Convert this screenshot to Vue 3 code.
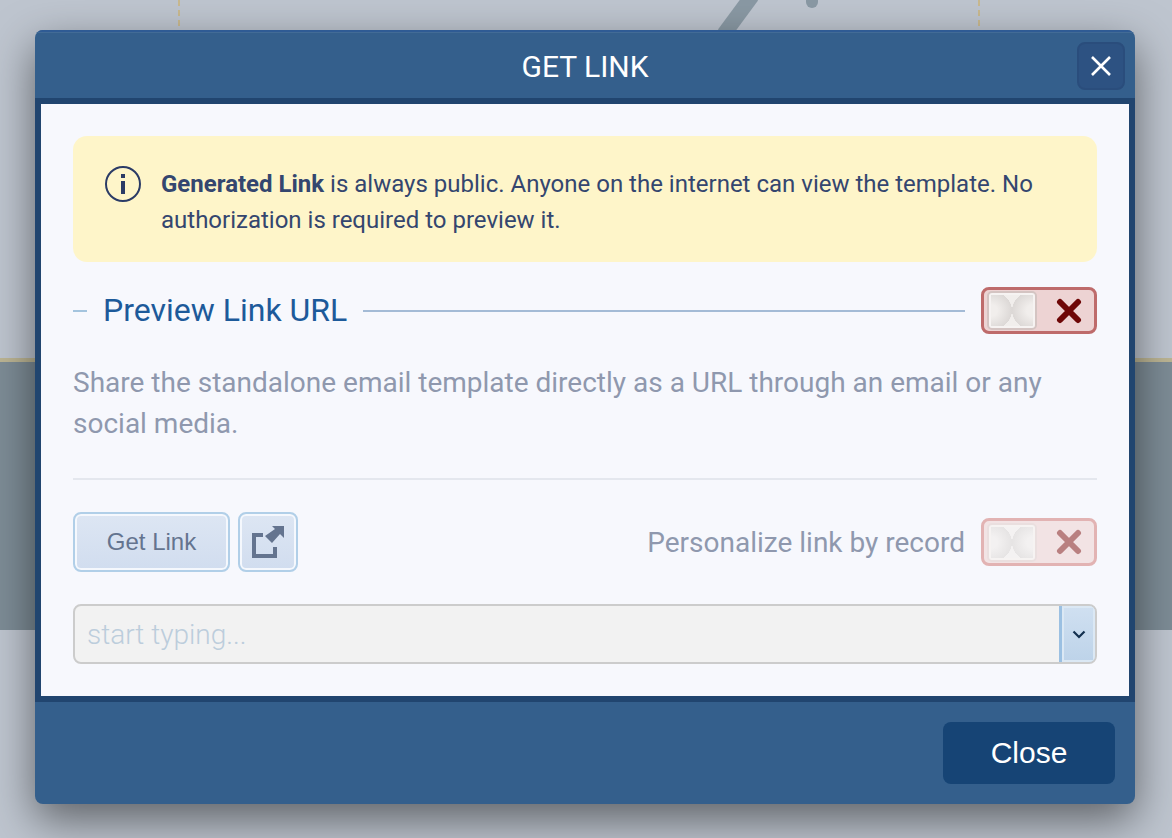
<template>
  <div class="page">
    <div class="backdrop">
      <div class="dash dash-left"></div>
      <div class="dash dash-right"></div>
      <svg class="art" width="1172" height="40" viewBox="0 0 1172 40">
        <path d="M752 -4L724 34" stroke="#8a99a4" stroke-width="15" fill="none" />
        <path d="M812 -6V2" stroke="#8a99a4" stroke-width="12" stroke-linecap="round" fill="none" />
      </svg>
      <div class="band"></div>
    </div>

    <div class="modal">
      <header class="modal-head">
        <h2 class="modal-title">GET LINK</h2>
        <button class="head-close">
          <svg width="20" height="20" viewBox="0 0 20 20">
            <path d="M1 1L19 19M19 1L1 19" stroke="#fff" stroke-width="2.6" />
          </svg>
        </button>
      </header>

      <div class="modal-body">
        <div class="notice">
          <svg class="notice-icon" width="36" height="36" viewBox="0 0 36 36">
            <circle cx="18" cy="18" r="17" fill="none" stroke="#2b3b66" stroke-width="2" />
            <rect x="16" y="8" width="4" height="4" fill="#2b3b66" />
            <rect x="16" y="15" width="4" height="13" fill="#2b3b66" />
          </svg>
          <p class="notice-text">
            <b>Generated Link</b> is always public. Anyone on the internet can view the template. No
            authorization is required to preview it.
          </p>
        </div>

        <div class="section-row">
          <span class="tick"></span>
          <span class="section-title">Preview Link URL</span>
          <span class="rule"></span>
          <div class="toggle">
            <span class="knob"><span class="knob-in"></span></span>
            <svg class="toggle-x" width="26" height="26" viewBox="0 0 26 26">
              <path d="M4 4L22 22M22 4L4 22" stroke="#6e0707" stroke-width="6" stroke-linecap="round" />
            </svg>
          </div>
        </div>

        <p class="desc">Share the standalone email template directly as a URL through an email or any social media.</p>

        <div class="divider"></div>

        <div class="actions">
          <button class="btn btn-text">Get Link</button>
          <button class="btn btn-icon">
            <svg width="34" height="34" viewBox="0 0 34 34">
              <path d="M12 10H3V31H24V22" fill="none" stroke="#64748f" stroke-width="4" />
              <path d="M21 1H33V13L29 9L21 18L14 11L24 4Z" fill="#64748f" />
            </svg>
          </button>
          <span class="spacer"></span>
          <span class="person-label">Personalize link by record</span>
          <div class="toggle toggle-off">
            <span class="knob"><span class="knob-in"></span></span>
            <svg class="toggle-x" width="26" height="26" viewBox="0 0 26 26">
              <path d="M4 4L22 22M22 4L4 22" stroke="#b98080" stroke-width="6" stroke-linecap="round" />
            </svg>
          </div>
        </div>

        <div class="picker">
          <span class="picker-text">start typing...</span>
          <span class="picker-arrow">
            <svg width="14" height="9" viewBox="0 0 14 9">
              <path d="M1.500 1.500L7 7L12.500 1.500" fill="none" stroke="#13304f" stroke-width="2.200" />
            </svg>
          </span>
        </div>
      </div>

      <footer class="modal-foot">
        <button class="foot-close">Close</button>
      </footer>
    </div>
  </div>
</template>

<script setup>
</script>

<style scoped>
.page {
  position: relative;
  width: 1172px;
  height: 838px;
  overflow: hidden;
  background: #bec5cf;
  padding-top: 30px;
  box-sizing: border-box;
  font-family: Roboto, sans-serif;
}
.backdrop {
  position: absolute;
  inset: 0;
}
.art {
  position: absolute;
  left: 0;
  top: 0;
}
.dash {
  position: absolute;
  top: 0;
  height: 358px;
  width: 2px;
  background: repeating-linear-gradient(to bottom, #c9b98f 0 6px, transparent 6px 10px);
}
.dash-left {
  left: 178px;
}
.dash-right {
  left: 978px;
}
.band {
  position: absolute;
  left: 0;
  right: 0;
  top: 358px;
  height: 272px;
  box-sizing: border-box;
  border-top: 4px solid #bcb594;
  background: #7d8c96;
}
.modal {
  position: relative;
  width: 1100px;
  margin-left: 35px;
  border-radius: 8px;
  overflow: hidden;
  background: #345f8c;
  box-shadow: 0 16px 44px rgba(0, 0, 0, 0.5);
}
.modal-head {
  position: relative;
  height: 68px;
  box-sizing: border-box;
  border-top: 2px solid #2f5b94;
  box-shadow: inset 0 1px 0 #426b96;
  display: flex;
  align-items: center;
  justify-content: center;
}
.modal-title {
  margin: 0;
  font-size: 30px;
  font-weight: 400;
  color: #fff;
  position: relative;
  top: 1px;
}
.head-close {
  position: absolute;
  right: 10px;
  top: 10px;
  width: 48px;
  height: 48px;
  padding: 0;
  display: flex;
  align-items: center;
  justify-content: center;
  background: #2d5282;
  border: 2px solid #2a4d7c;
  border-radius: 8px;
}
.modal-body {
  box-sizing: border-box;
  border: 6px solid #21456f;
  background: #f7f8fd;
  padding: 32px;
}
.notice {
  height: 126px;
  box-sizing: border-box;
  padding: 30px 32px 0;
  background: #fef5c9;
  border-radius: 14px;
  display: flex;
  gap: 20px;
}
.notice-icon {
  flex: none;
}
.notice-text {
  margin: 0;
  font-size: 24px;
  line-height: 36px;
  color: #34466f;
}
.notice-text b {
  font-weight: 700;
}
.section-row {
  display: flex;
  align-items: center;
  margin-top: 25px;
}
.tick {
  width: 14px;
  height: 2px;
  background: #a4c4de;
  margin-right: 16px;
}
.section-title {
  font-size: 32px;
  line-height: 47px;
  color: #1d5a9a;
}
.rule {
  flex: 1;
  height: 2px;
  background: #a4bbd6;
  margin: 0 16px;
}
.toggle {
  width: 116px;
  height: 47px;
  flex: none;
  box-sizing: border-box;
  display: flex;
  align-items: center;
  background: #edd3d3;
  border: 3px solid #be6b6b;
  border-radius: 8px;
  padding-left: 3px;
}
.toggle-off {
  height: 48px;
  background: #f2e3e4;
  border-color: #e2b3b3;
}
.knob {
  width: 50px;
  height: 39px;
  flex: none;
  box-sizing: border-box;
  border: 2px solid #d4c4c2;
  border-radius: 5px;
  background: #f6f3f2;
  padding: 2px;
  display: block;
}
.knob-in {
  display: block;
  height: 100%;
  background:
    radial-gradient(ellipse 50% 62% at 0 50%, #f1eeec 30%, #dcd8d6 99%, transparent 100%),
    radial-gradient(ellipse 50% 62% at 100% 50%, #f1eeec 30%, #dcd8d6 99%, transparent 100%),
    #f1eeec;
}
.toggle-off .knob {
  border-color: #eadfdf;
}
.toggle-off .knob-in {
  background:
    radial-gradient(ellipse 50% 62% at 0 50%, #f3f1f1 30%, #e6e4e4 99%, transparent 100%),
    radial-gradient(ellipse 50% 62% at 100% 50%, #f3f1f1 30%, #e6e4e4 99%, transparent 100%),
    #f4f2f2;
}
.toggle-x {
  margin-left: 19px;
}
.desc {
  margin: 28px 0 0;
  font-size: 28px;
  line-height: 41px;
  color: #8f98ae;
}
.divider {
  height: 2px;
  background: #e4e7ee;
  margin: 34px 0 32px;
}
.actions {
  display: flex;
  align-items: center;
  height: 60px;
}
.btn {
  height: 60px;
  box-sizing: border-box;
  padding: 0;
  border: 2px solid #b1cfe8;
  border-radius: 8px;
  box-shadow: inset 0 0 0 2px #f5f8fd;
  background: linear-gradient(to bottom, #dde6f3, #d1ddef);
  display: flex;
  align-items: center;
  justify-content: center;
}
.btn-text {
  width: 157px;
  font-family: "Liberation Sans", Arial, sans-serif;
  font-size: 24px;
  color: #64748f;
}
.btn-icon {
  width: 60px;
  margin-left: 8px;
}
.spacer {
  flex: 1;
}
.person-label {
  font-size: 28px;
  color: #8f98ae;
  margin-right: 16px;
}
.picker {
  margin-top: 32px;
  height: 60px;
  box-sizing: border-box;
  border: 2px solid #cccccc;
  border-radius: 8px;
  background: #f2f2f2;
  display: flex;
  overflow: hidden;
}
.picker-text {
  flex: 1;
  align-self: center;
  padding-left: 12px;
  font-size: 28px;
  font-weight: 300;
  color: #bccddc;
}
.picker-arrow {
  width: 36px;
  box-sizing: border-box;
  border-left: 3px solid #9bc0e2;
  box-shadow: inset 0 0 0 2px #dbe8f4;
  background: linear-gradient(to bottom, #d0e0f1, #bdd3e9);
  display: flex;
  align-items: center;
  justify-content: center;
}
.modal-foot {
  height: 102px;
  box-sizing: border-box;
  padding: 20px 20px 0 0;
  display: flex;
  justify-content: flex-end;
}
.foot-close {
  width: 172px;
  height: 62px;
  padding: 0;
  border: 0;
  border-radius: 8px;
  background: #164475;
  color: #fff;
  font-family: "Liberation Sans", Arial, sans-serif;
  font-size: 30px;
}
</style>
